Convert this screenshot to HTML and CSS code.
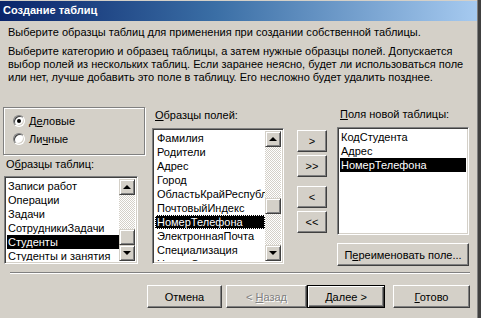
FILE: index.html
```html
<!DOCTYPE html>
<html lang="ru">
<head>
    <meta charset="UTF-8">
    <title>Создание таблиц</title>
    <link rel="stylesheet" href="styles.css">
</head>
<body>
    <div class="window">
        <div class="titlebar">Создание таблиц</div>
        <div class="content">
            <p class="intro">Выберите образцы таблиц для применения при создании собственной таблицы.</p>
            <p class="desc">Выберите категорию и образец таблицы, а затем нужные образцы полей. Допускается выбор полей из нескольких таблиц. Если заранее неясно, будет ли использоваться поле или нет, лучше добавить это поле в таблицу. Его несложно будет удалить позднее.</p>

            <div class="main">
                <div class="col-left">
                    <div class="groupbox">
                        <div class="radio-row"><span class="radio checked"></span>Д<u>е</u>ловые</div>
                        <div class="radio-row"><span class="radio"></span>Ли<u>ч</u>ные</div>
                    </div>
                    <div class="label">О<u>б</u>разцы таблиц:</div>
                    <div class="listbox list-tables">
                        <ul class="items">
                            <li>Записи работ</li>
                            <li>Операции</li>
                            <li>Задачи</li>
                            <li>СотрудникиЗадачи</li>
                            <li class="selected">Студенты</li>
                            <li>Студенты и занятия</li>
                        </ul>
                        <div class="scrollbar">
                            <div class="sb-btn"><span class="arrow up"></span></div>
                            <div class="sb-track thumb-end">
                                <div class="sb-thumb"></div>
                            </div>
                            <div class="sb-btn"><span class="arrow down"></span></div>
                        </div>
                    </div>
                </div>

                <div class="col-mid">
                    <div class="label"><u>О</u>бразцы полей:</div>
                    <div class="listbox list-fields">
                        <ul class="items">
                            <li>Фамилия</li>
                            <li>Родители</li>
                            <li>Адрес</li>
                            <li>Город</li>
                            <li>ОбластьКрайРеспублика</li>
                            <li>ПочтовыйИндекс</li>
                            <li class="selected focus">НомерТелефона</li>
                            <li>ЭлектроннаяПочта</li>
                            <li>Специализация</li>
                            <li>НомерСтудента</li>
                        </ul>
                        <div class="scrollbar">
                            <div class="sb-btn"><span class="arrow up"></span></div>
                            <div class="sb-track">
                                <div class="sb-thumb mid-thumb"></div>
                            </div>
                            <div class="sb-btn"><span class="arrow down"></span></div>
                        </div>
                    </div>
                </div>

                <div class="col-btns">
                    <button class="btn small">&gt;</button>
                    <button class="btn small">&gt;&gt;</button>
                    <button class="btn small spaced">&lt;</button>
                    <button class="btn small">&lt;&lt;</button>
                </div>

                <div class="col-right">
                    <div class="label"><u>П</u>оля новой таблицы:</div>
                    <div class="listbox list-new">
                        <ul class="items">
                            <li>КодСтудента</li>
                            <li>Адрес</li>
                            <li class="selected">НомерТелефона</li>
                        </ul>
                    </div>
                    <button class="btn rename">П<u>е</u>реименовать поле...</button>
                </div>
            </div>

            <div class="separator"></div>

            <div class="footer">
                <button class="btn cancel">Отмена</button>
                <button class="btn back disabled">&lt; <u>Н</u>азад</button>
                <button class="btn next default"><u>Д</u>алее &gt;</button>
                <button class="btn finish"><u>Г</u>отово</button>
            </div>
        </div>
    </div>
</body>
</html>
```

FILE: styles.css
```css
body {
    margin: 0;
    background: #ffffff;
    font-family: "Liberation Sans", Arial, sans-serif;
    font-size: 11px;
    color: #000;
}
.window {
    width: 481px;
    height: 318px;
    padding-top: 1px;
    box-sizing: border-box;
    background: #d4d0c8;
    border-right: 3px solid #404040;
    box-shadow: inset -1px 0 #808080;
    overflow: hidden;
}
.titlebar {
    height: 20px;
    line-height: 19px;
    padding-left: 3px;
    margin-right: 1px;
    background: linear-gradient(to right, #0a246a, #3a6ea5 45%, #a6caf0);
    color: #fff;
    font-weight: bold;
    font-size: 11px;
}
.content {
    padding-left: 8px;
}
.intro {
    margin: 5px 0 0 0;
    line-height: 13px;
}
.desc {
    margin: 6px 0 0 0;
    width: 468px;
    line-height: 13px;
}

.main {
    display: flex;
    align-items: flex-start;
    margin-top: 23px;
    margin-left: -5px;
}
.col-left {
    width: 142px;
}
.col-mid {
    margin-left: 7px;
    width: 132px;
}
.col-btns {
    display: flex;
    flex-direction: column;
    margin-left: 13px;
    margin-top: 23px;
    gap: 3px;
}
.col-right {
    margin-left: 10px;
    width: 132px;
}

.groupbox {
    height: 48px;
    border: 1px solid #808080;
    box-shadow: inset 1px 1px #fff, 1px 1px #fff;
    padding: 4px 0 0 9px;
    box-sizing: border-box;
}
.radio-row {
    display: flex;
    align-items: center;
    height: 18px;
}
.radio {
    position: relative;
    width: 12px;
    height: 12px;
    margin-right: 4px;
    border-radius: 50%;
    background: #fff;
    border: 1px solid;
    border-color: #808080 #fff #fff #808080;
    box-shadow: inset 1px 1px #404040, inset -1px -1px #d4d0c8;
    box-sizing: border-box;
}
.radio.checked::after {
    content: "";
    position: absolute;
    left: 3px;
    top: 3px;
    width: 4px;
    height: 4px;
    border-radius: 50%;
    background: #000;
}

.label {
    height: 13px;
    line-height: 13px;
    margin: 2px 0 6px 3px;
}
.col-left .label {
    margin: 3px 0 5px 3px;
}
.col-right .label {
    margin: 1px 0 6px 3px;
}

.listbox {
    display: flex;
    background: #fff;
    border: 1px solid;
    border-color: #808080 #fff #fff #808080;
    box-shadow: inset 1px 1px #404040, inset -1px -1px #d4d0c8;
    padding: 2px;
    box-sizing: border-box;
    overflow: hidden;
}
.list-tables {
    height: 88px;
    width: 134px;
    margin-left: 1px;
}
.list-fields {
    height: 136px;
}
.list-new {
    height: 108px;
}
.items {
    flex: 1;
    min-width: 0;
    margin: 0;
    padding: 0;
    list-style: none;
    overflow: hidden;
}
.items li {
    height: 14px;
    line-height: 14px;
    padding-left: 1px;
    white-space: nowrap;
    overflow: hidden;
}
.list-fields .items li {
    padding-left: 2px;
}
.items li.selected {
    background: #000;
    color: #fff;
}
.items li.focus {
    outline: 1px dotted #fff;
    outline-offset: -1px;
}

.scrollbar {
    display: flex;
    flex-direction: column;
    width: 16px;
    flex: none;
}
.sb-btn, .sb-thumb {
    height: 16px;
    flex: none;
    display: flex;
    align-items: center;
    justify-content: center;
    background: #d4d0c8;
    border: 1px solid;
    border-color: #d4d0c8 #404040 #404040 #d4d0c8;
    box-shadow: inset 1px 1px #fff, inset -1px -1px #808080;
    box-sizing: border-box;
}
.sb-track {
    flex: 1;
    display: flex;
    flex-direction: column;
    background: repeating-conic-gradient(#fff 0 25%, #d4d0c8 0 50%) 0 0 / 2px 2px;
}
.thumb-end {
    justify-content: flex-end;
}
.mid-thumb {
    margin-top: 51px;
}
.arrow {
    width: 0;
    height: 0;
    border-left: 4px solid transparent;
    border-right: 4px solid transparent;
}
.arrow.up {
    border-bottom: 4px solid #000;
    margin-top: -1px;
}
.arrow.down {
    border-top: 4px solid #000;
}

.btn {
    font-family: "Liberation Sans", Arial, sans-serif;
    font-size: 11px;
    color: #000;
    background: #d4d0c8;
    border: 1px solid;
    border-color: #fff #404040 #404040 #fff;
    box-shadow: inset -1px -1px #808080;
    padding: 0;
    margin: 0;
    height: 23px;
    box-sizing: border-box;
}
.btn.small {
    width: 30px;
    height: 22px;
}
.btn.spaced {
    margin-top: 6px;
}
.btn.rename {
    width: 132px;
    margin-top: 8px;
}
.btn.default {
    border: 1px solid #000;
    box-shadow: inset 1px 1px #fff, inset -1px -1px #404040, inset -2px -2px #808080;
}
.btn.disabled {
    color: #808080;
    text-shadow: 1px 1px #fff;
}

.separator {
    height: 1px;
    width: 460px;
    margin: 6px 0 0 2px;
    background: #808080;
    border-bottom: 1px solid #fff;
}
.footer {
    display: flex;
    margin: 11px 0 0 139px;
}
.cancel {
    width: 75px;
}
.back {
    width: 81px;
    margin-left: 4px;
}
.next {
    width: 78px;
}
.finish {
    width: 77px;
    margin-left: 8px;
}
```
